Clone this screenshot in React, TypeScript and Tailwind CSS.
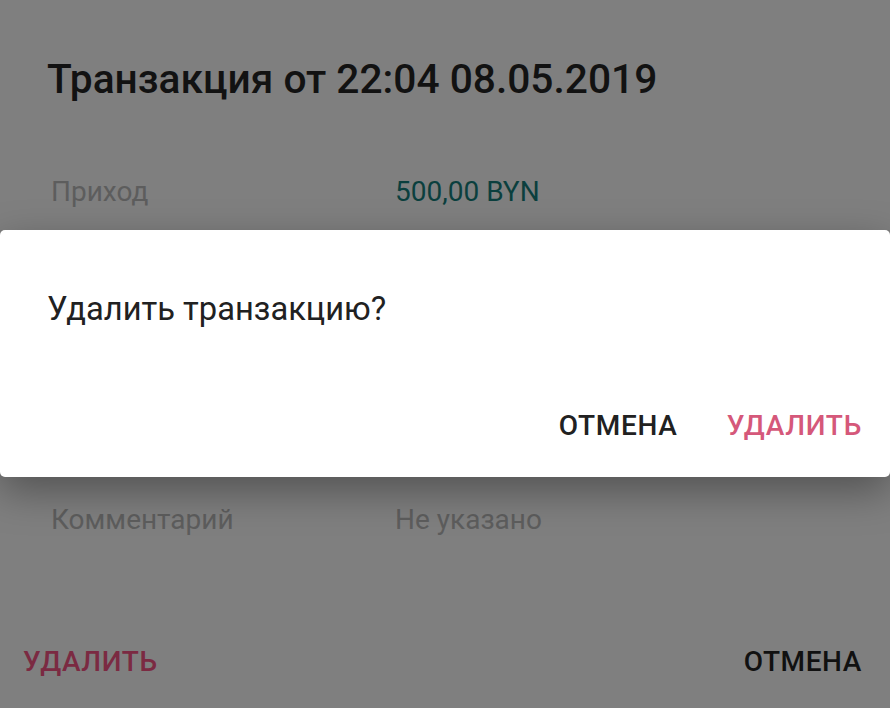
import React from 'react';

function InfoRow({ label, value, valueClass }: { label: string; value: string; valueClass: string }) {
  return (
    <div className="flex items-baseline text-[28px] leading-[32px]">
      <span className="w-[344px] flex-shrink-0 text-[#5d5d5d]">{label}</span>
      <span className={valueClass}>{value}</span>
    </div>
  );
}

export default function App() {
  return (
    <div
      className="relative w-[890px] h-[708px] overflow-hidden bg-[#7f7f7f]"
      style={{ fontFamily: 'Roboto, "Noto Sans", sans-serif' }}
    >
      {/* dimmed sheet underneath */}
      <div className="flex flex-col h-full">
        <h1 className="pl-[47px] pt-[55px] text-[40.7px] leading-[48px] font-medium text-[#121212]">
          Транзакция от 22:04 08.05.2019
        </h1>
        <div className="pl-[51px] mt-[73px]">
          <InfoRow label="Приход" value="500,00 BYN" valueClass="text-[#0b3f3e]" />
        </div>
        <div className="pl-[51px] mt-[296px]">
          <InfoRow label="Комментарий" value="Не указано" valueClass="text-[#5d5d5d]" />
        </div>
        <div className="flex justify-between pl-[23px] pr-[28px] mt-[110px] text-[28px] leading-[32px] font-medium tracking-[0.6px]">
          <span className="text-[#7b2a42]">УДАЛИТЬ</span>
          <span className="text-[#111111]">ОТМЕНА</span>
        </div>
      </div>

      {/* confirm dialog */}
      <div className="absolute left-0 right-0 top-[230px] h-[247px] bg-white rounded-[5px] shadow-[0_14px_40px_rgba(0,0,0,0.35)] flex flex-col">
        <p className="pl-[47px] pt-[59px] text-[32.7px] leading-[40px] text-[#212121]">Удалить транзакцию?</p>
        <div className="mt-auto flex justify-end gap-[49px] pr-[28px] pb-[33px] text-[28px] leading-[36px] font-medium tracking-[0.7px]">
          <span className="text-[#212121]">ОТМЕНА</span>
          <span className="text-[#d5587a]">УДАЛИТЬ</span>
        </div>
      </div>
    </div>
  );
}
